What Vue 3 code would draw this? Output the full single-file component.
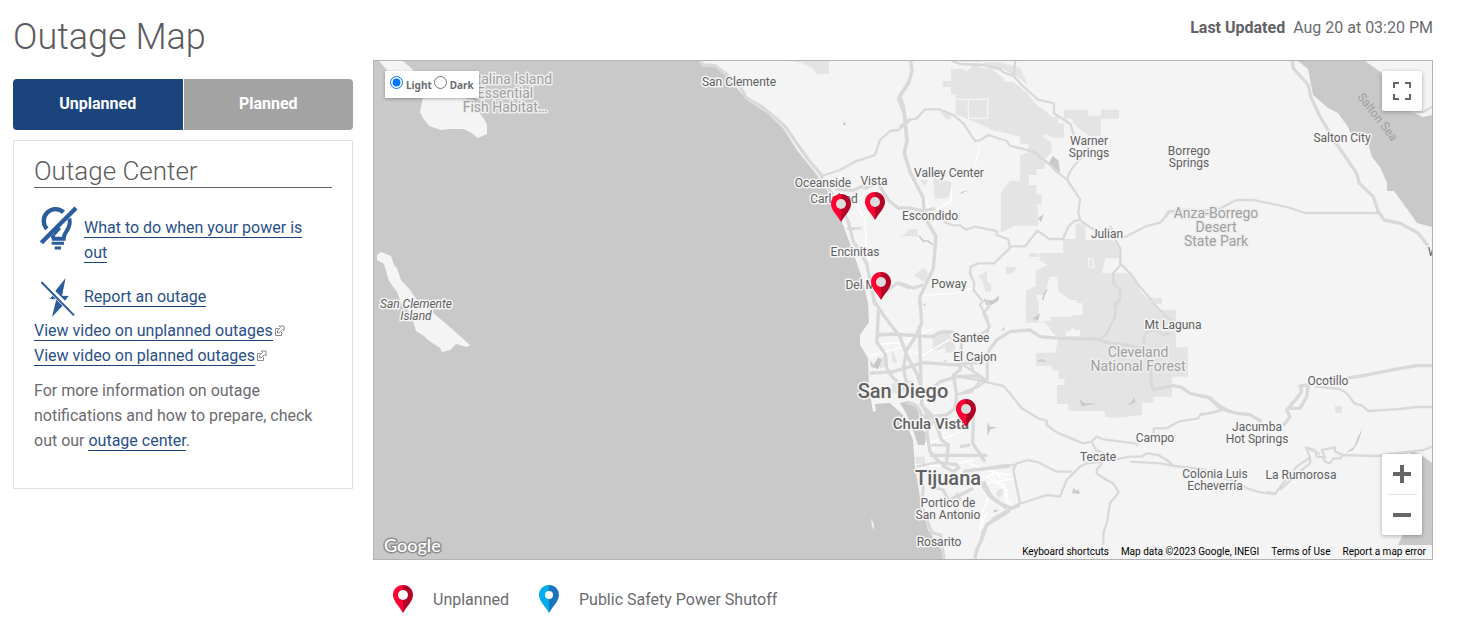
<script setup>
import { ref } from 'vue'

const tab = ref('unplanned')
const theme = ref('light')

const pins = [
  { x: 841, y: 208 },
  { x: 875, y: 206 },
  { x: 881, y: 286 },
  { x: 966, y: 413 },
]

const labels = [
  { x: 506, y: 84, kind: 'area', lines: ['Catalina Island'] },
  { x: 505, y: 98, kind: 'area', lines: ['Essential', 'Fish Habitat…'] },
  { x: 739, y: 86, lines: ['San Clemente'] },
  { x: 823, y: 187, lines: ['Oceanside'] },
  { x: 874, y: 185, lines: ['Vista'] },
  { x: 834, y: 203, lines: ['Carlsbad'] },
  { x: 949, y: 177, lines: ['Valley Center'] },
  { x: 930, y: 220, lines: ['Escondido'] },
  { x: 855, y: 256, lines: ['Encinitas'] },
  { x: 866, y: 289, lines: ['Del Mar'] },
  { x: 949, y: 288, lines: ['Poway'] },
  { x: 1089, y: 145, lines: ['Warner', 'Springs'] },
  { x: 1189, y: 155, lines: ['Borrego', 'Springs'] },
  { x: 1107, y: 238, lines: ['Julian'] },
  { x: 1342, y: 142, lines: ['Salton City'] },
  { x: 1216, y: 218, kind: 'area', lines: ['Anza-Borrego', 'Desert', 'State Park'] },
  { x: 416, y: 308, kind: 'island', lines: ['San Clemente', 'Island'] },
  { x: 971, y: 342, lines: ['Santee'] },
  { x: 975, y: 361, lines: ['El Cajon'] },
  { x: 903, y: 398, kind: 'city', lines: ['San Diego'] },
  { x: 931, y: 429, kind: 'town', lines: ['Chula Vista'] },
  { x: 948, y: 485, kind: 'city', lines: ['Tijuana'] },
  { x: 948, y: 507, lines: ['Portico de', 'San Antonio'] },
  { x: 939, y: 546, lines: ['Rosarito'] },
  { x: 1173, y: 329, lines: ['Mt Laguna'] },
  { x: 1138, y: 357, kind: 'area', lines: ['Cleveland', 'National Forest'] },
  { x: 1155, y: 442, lines: ['Campo'] },
  { x: 1098, y: 461, lines: ['Tecate'] },
  { x: 1257, y: 431, lines: ['Jacumba', 'Hot Springs'] },
  { x: 1215, y: 478, lines: ['Colonia Luis', 'Echeverría'] },
  { x: 1301, y: 479, lines: ['La Rumorosa'] },
  { x: 1328, y: 385, lines: ['Ocotillo'] },
  { x: 1433, y: 256, lines: ['W'] },
]
</script>

<template>
  <main class="page">
    <section class="side">
      <h1>Outage Map</h1>
      <div class="tabs" role="tablist">
        <button role="tab" :class="{ active: tab === 'unplanned' }" :aria-selected="tab === 'unplanned'" @click="tab = 'unplanned'">Unplanned</button>
        <button role="tab" :class="{ active: tab === 'planned' }" :aria-selected="tab === 'planned'" @click="tab = 'planned'">Planned</button>
      </div>
      <div class="card">
        <h2>Outage Center</h2>
        <div class="item">
          <svg class="icon" viewBox="0 0 120 135" width="40" height="45" fill="none" stroke="#2b5c9b">
            <path d="M74 22A35 35 0 0 0 25 73" stroke-width="13" />
            <path d="M91 40C95 58 90 68 83 78Q74 89 74 101H44Q43 92 36 84" stroke-width="12" />
            <path d="M2 110L108 5" stroke="#fff" stroke-width="24" />
            <path d="M60 66L66 72L48 92L44 84Z" fill="#2b5c9b" stroke="none" />
            <path d="M7 113L111 9" stroke-width="13" />
            <path d="M38 115H75M47 129H66" stroke-width="9" />
          </svg>
          <p><a href="#power-out">What to do when your power is out</a></p>
        </div>
        <div class="item report">
          <svg class="icon" viewBox="0 0 120 123" width="40" height="41">
            <path fill="#2b5c9b" d="M80 3L49 42L78 71L89 57L69 56ZM43 53L32 66L52 67L39 120L73 84Z" />
            <path d="M4 12L108 117" stroke="#fff" stroke-width="10" />
            <path d="M7 15L105 115" stroke="#2b5c9b" stroke-width="6" />
          </svg>
          <p><a href="#report">Report an outage</a></p>
        </div>
        <ul class="videos">
          <li v-for="kind in ['unplanned', 'planned']" :key="kind">
            <a :href="'#video-' + kind">View video on {{ kind }} outages</a>
            <svg class="ext" viewBox="0 0 11 11" width="11" height="11" fill="none" stroke="#8a8a8a">
              <path d="M4.500 3.500H1.500V10.500H7.500V7" />
              <path d="M5 1H10V6L8.500 4.500L5.500 7.500L3.500 8V5.500L6.500 2.500Z" fill="#fff" />
            </svg>
          </li>
        </ul>
        <p class="more">For more information on outage notifications and how to prepare, check out our <a href="#center">outage center</a>.</p>
      </div>
    </section>

    <section class="main">
      <p class="updated"><strong>Last Updated</strong> <span>Aug 20 at 03:20 PM</span></p>
      <div class="map">
        <svg class="canvas" viewBox="374 61 1058 498" preserveAspectRatio="xMinYMin slice" role="img" aria-label="Map of outages">
          <defs>
            <symbol id="pin-red" viewBox="0 0 20 28">
              <path fill="#ff0032" d="M10 0C4 0 0 4.500 0 10C0 16 6 21 10 28Z" />
              <path fill="#b30024" d="M10 0C16 0 20 4.500 20 10C20 16 14 21 10 28Z" />
            </symbol>
          </defs>

          <!-- land -->
          <path class="land" d="M700 61L703 67H715L730 79L740 92L747 100L767 113L783 128L797 150L817 175L832 198L843 225L853 252L862 278L868 303L869 322L860 335V345L868 358L869 387L871 400L873 412L876 411L875 404L890 403L903 415L913 440L915 467L920 497L928 530L940 547L944 559H1432V61Z" />
          <path class="land" d="M379 61H403L412 69L422 79L440 85L462 94L475 107L484 119L487 125V134L478 138L470 132L463 129H449L441 130L429 126L423 118L420 112L423 97L404 83L392 76Z" />
          <path class="land" d="M377 255L381 252L391 256L394 265L397 268L401 280L411 291L420 305L432 312L451 328L470 345L467 347L456 344L450 350L442 352L440 348L428 340L424 336L416 331L411 314L401 303L397 292L389 281L384 264L377 260Z" />
          <path class="land" d="M871 518L874 525V530L872 526Z" />

          <!-- water inland -->
          <path class="sea" d="M1298 61L1308 69L1313 95L1328 108L1338 113L1348 127L1350 132L1368 143L1372 157L1380 167L1387 183V191H1394L1410 213L1417 223L1432 227V115L1423 117L1412 112L1382 73L1365 61Z" />
          <path class="sea" d="M1398 545L1410 520V450L1421 455L1432 463V545ZM900 403L909 401L918 410L922 430L926 433L925 445H918L913 430L906 413Z" />

          <!-- parks, north -->
          <g transform="translate(900 55) scale(.333333)">
            <path class="park" d="M153 42H187L202 50L218 30L240 25V38H270L312 70V80H340L381 113L410 150L432 165L455 185H475V205H492V248H460L437 236L428 244L455 265V290L436 313L434 342H410V360H387V390H410V418H425V448H412L415 512H345L302 534V415L330 377H360V303L385 292V268H360V246L320 235L285 228L238 207L167 178V118H153V97H128V78H153Z" />
            <path class="park" d="M492 165H565V182H603V164H657V191H603V240L577 247L545 228L517 202V191H492Z" />
            <path class="park" d="M527 505H556V555H635L660 575V610H617L607 650V750H530L475 708L472 665H407V646L443 630L418 614V594H489V552H527Z" />
            <path class="park" d="M407 665H450L432 720H410V750H378V708L407 692ZM387 595H415V606H390ZM317 636H347V645L332 657H319ZM236 663L260 648L262 677L274 690V710H256L250 685ZM98 370L153 380L156 406L140 430L105 432ZM42 660L70 638L83 651L78 685ZM720 728H786V748H720Z" />
            <path class="park" d="M119 168L155 180L151 194L137 192ZM12 542L25 524L52 521L54 545ZM60 376L82 374L76 395Z" />
            <path class="pale" d="M168 133H263V190H205V134M565 612H577L584 637L567 635Z" />
            <path class="dark" d="M445 328L458 303L475 316L480 350L470 355ZM414 490L431 478L423 502ZM252 730L275 740L296 722V736L275 750H258ZM180 418L206 406L185 410Z" />
            <path class="dark-line" d="M57 543L70 558L84 558L99 569M427 750L431 720L441 704" />
          </g>
          <path class="park" d="M955 61H980L994 68H1000L1015 75L1028 85L1020 68L1000 62ZM789 61H829V74H817L812 68L802 63Z" />
          <!-- parks, south -->
          <g transform="translate(960 300) scale(.333333)">
            <path class="park" d="M196 0H236V65H255V30H360V45H388V0H505L570 0L600 30H648V142H684V230H636V290H581V308H546V345L470 353L435 351V333H325V312H291V255H313V237H295V212H275V197H228V158H285L295 115L275 95L255 68H198Z" />
            <path class="park" d="M378 -68H430V60H360V15L378 0ZM425 -80H510L545 -20L570 0V60H425Z" />
            <path class="land" d="M245 0H350V10H368V45H338V50H272V62H245ZM318 108V96L332 92L337 80L345 90H360V108Z" />
            <path class="dark" d="M82 365L90 380L112 382L92 388L82 408ZM357 295L370 308L408 312L365 318ZM502 310L515 308L521 291L527 306L510 315ZM336 580L341 562L347 573L355 568L360 582ZM218 57L240 40L235 60ZM230 184L245 177L262 185ZM104 628L116 634L100 637ZM124 90L135 80L131 92ZM68 2L90 15L108 0Z" />
            <path class="park" d="M107 580L118 567L130 568V582L116 595Z" />
          </g>
          <g transform="translate(740 300) scale(.333333)">
            <path class="park" d="M578 112L600 96L630 97L635 120L620 140L595 150H577ZM615 130L640 125L648 145L635 158H617ZM452 143L473 186L460 189ZM420 175L434 169V200L420 205ZM525 472L553 469L556 492H528ZM455 250H480L520 240V280H455Z" />
            <path class="dark" d="M390 180L400 195L415 172L425 180L415 207L393 200ZM388 215L405 214L400 222ZM610 182L624 180L613 185ZM548 15L560 8L553 18Z" />
          </g>
          <path class="dark" d="M843 125L844 121L846 125ZM846 228L860 228L850 231ZM1345 453L1354 447L1358 437L1363 427L1358 442L1353 450Z" />
          <path class="park" d="M1335 406H1342V413H1335ZM910 232L900 236H905L910 228Z" />

          <!-- white streets -->
          <g class="street">
            <g transform="translate(900 55) scale(.333333)"><path d="M237 262L234 300L222 340M155 395L153 440L105 465M55 722L160 716L215 700M75 430L90 470L107 510" /></g>
            <g transform="translate(740 300) scale(.333333)"><path d="M388 168L480 143L495 150L550 165L630 118M415 132L490 128L580 85M555 432L620 412L680 388M720 690L730 630L755 570M535 495L620 500L700 480M690 490L730 510L810 525M740 530L800 570L805 625M760 510L790 545M570 550L600 575M610 410L620 345" /></g>
            <g transform="translate(960 300) scale(.333333)"><path d="M50 505L70 535L105 520L150 540M75 550L165 535M90 500L105 545L135 555V600L155 612M60 690L80 635" /></g>
            <g transform="translate(640 55) scale(.333333)"><path d="M600 355V385L590 410M650 455L675 490L680 600L695 620M600 420L615 460" /></g>
          </g>

          <!-- roads -->
          <g class="road">
            <g transform="translate(640 55) scale(.333333)">
              <path class="wide" d="M180 17L190 30L225 32L275 70L300 95L318 128L365 155L400 183L437 216L470 265L510 320L540 355L565 400L600 450L625 500L640 560L680 625L690 680L705 750" />
              <path class="wide" d="M810 75L775 130L793 175L800 258L793 295L810 350M670 400L715 385L745 435L775 460L810 459M585 402L640 406L670 392M740 708L772 684L810 699" />
              <path d="M545 363L600 345L645 320L705 300L720 255L750 228L775 225L810 195M625 520H665" />
            </g>
            <g transform="translate(900 55) scale(.333333)">
              <path class="wide" d="M32 17L36 48L25 85L0 123L12 160L22 260L12 290L30 350L70 430L72 465L85 505L108 545L100 640L60 725L58 750" />
              <path class="wide" d="M0 459L35 460L70 468L105 460M0 685L40 699L70 690" />
              <path d="M155 17L180 27L250 30L300 42L310 52L340 62L365 90L413 133L462 145V175L512 208L522 242M346 17L341 62M0 215L25 195L50 190L75 163H118L160 180L190 205L225 258L240 256L265 240L320 258L330 272L400 290L445 325L470 350L502 375L540 433L535 470L540 495L522 498L505 515L489 552H448L412 527L375 574H335L282 625H235L212 635L210 655L223 685L221 706L245 735M502 375Q505 335 580 280M540 495L575 520L640 545L661 580V630L640 655V685L660 705V735L640 750M630 513L650 545M661 625L695 660L715 690L755 735M130 500L158 511H180L198 524L225 515L290 528V540L325 553L330 578M668 550L735 515L780 503L810 470L850 466" />
            </g>
            <g transform="translate(1165 0) scale(.333333)">
              <path d="M0 650L10 635L60 628L110 632L160 628L215 600H265L370 622L420 639H640M740 335L775 336L802 320" />
              <path class="wide" d="M382 182L385 205L430 255L437 290L465 350L510 425L575 520L583 550L625 590L640 635L658 660L705 670L760 700L802 755" />
            </g>
            <g transform="translate(740 300) scale(.333333)">
              <path class="wide" d="M400 0L430 45L480 110L500 165L530 220L545 265V310L575 370L560 395L570 455L600 488L655 495M415 30L412 105L410 125L436 163L440 205L460 235L500 270M540 0L545 70L530 105L500 150L490 205L500 250M538 75L543 250M415 105L460 102L500 105L575 110L605 95L635 96L670 115M390 220L460 215L550 188L650 195L690 188M665 125L660 210L640 225L650 285L645 325L620 345L550 352M545 290L600 245L650 230L705 228L740 240M500 310Q530 305 545 345L565 355M540 310L580 350L605 420L625 435L620 488M570 466H742M690 300L700 350L698 430L715 455L735 485M660 440L690 435M670 515L700 510L810 498M660 500L640 515L605 495M575 560L610 570L625 600L650 590L700 565M650 580L660 600M730 545L755 590L800 625M810 632L740 675L725 720L710 750L705 776M550 555L545 620L575 698L602 705L612 776" />
              <path d="M735 0L750 15L730 40L748 80L740 105L720 110M670 195L740 240L715 260L655 283M720 190H690L700 210M575 435L620 437M530 500L600 485M740 180L742 240" />
            </g>
            <g transform="translate(960 300) scale(.333333)">
              <path class="wide" d="M84 155L110 120L150 95L210 90L240 110L300 115L410 117L440 127L500 135L540 145L570 190L575 255L580 268L640 257L665 262L690 280L745 292L790 325L810 335M60 545L90 590L115 608L155 625L180 615" />
              <path d="M84 155L82 240L60 242L0 230M0 282L35 275L60 242L130 258L150 280L185 325L235 355L260 362V375L290 397L370 430L395 425L410 410L430 418L525 430L535 437M395 425L408 450L430 460L425 490L410 510V520L440 540L460 550L476 577L450 610L440 670L430 700V735M430 485L510 470H545L560 460L595 465L620 480L640 497L740 510M510 485L600 490L650 500M430 485L380 490L360 500L340 520L320 540L300 590L260 585L200 605L180 610L160 510L170 490L205 480L235 487L290 515H335M60 510L120 497L165 495M180 610L100 655L70 690L45 776M70 0L60 15L80 50L88 80L75 95L45 110M480 0L465 20V50L440 100L420 120M580 400L582 385H620L655 365L715 355L720 345L785 332M555 135L550 115L560 95L590 90L610 105L630 100M575 5L615 45L650 75" />
            </g>
            <g transform="translate(1200 250) scale(.333333)">
              <path class="wide" d="M0 437L30 443L60 475L110 490L150 494L185 515M250 527L270 500L260 480L290 445L305 425L300 408L325 405L320 440L300 475H270M440 385L500 375L600 355L650 347H696" />
              <path d="M0 492L30 490L60 480M345 410L420 417L440 430L463 460L485 466L505 483L600 477L650 471H696M50 680L110 695L140 715L185 728L225 732L245 705L290 650L330 622L318 592L345 600L350 620L375 622L365 600L405 592L405 605L430 615L420 625L400 625L390 640L375 635L370 620M425 615L530 618L670 600L696 590M230 732L200 725M330 620L330 640L300 665L240 720M318 592L360 612" />
            </g>
          </g>

          <text class="sea-name" transform="translate(1357 97) rotate(52)">Salton Sea</text>
          <text v-for="label in labels" :key="label.lines[0] + label.x" :x="label.x" :y="label.y" :class="['label', label.kind]">
            <tspan v-for="(line, i) in label.lines" :key="line" :x="label.x" :dy="i ? (label.kind === 'area' ? 14 : 12) : 0">{{ line }}</tspan>
          </text>

          <g v-for="pin in pins" :key="pin.x">
            <use href="#pin-red" :x="pin.x - 10" :y="pin.y - 14" width="20" height="28" />
            <circle :cx="pin.x" :cy="pin.y - 4" r="5" fill="#dcdcdc" />
          </g>
        </svg>

        <fieldset class="theme">
          <label><input v-model="theme" type="radio" name="theme" value="light" />Light</label>
          <label><input v-model="theme" type="radio" name="theme" value="dark" />Dark</label>
        </fieldset>

        <button class="control full" aria-label="Toggle fullscreen view">
          <svg viewBox="0 0 18 18" width="18" height="18" fill="none" stroke="#666" stroke-width="2"><path d="M1 6V1H6M12 1H17V6M17 12V17H12M6 17H1V12" /></svg>
        </button>
        <div class="control zoom">
          <button aria-label="Zoom in"><svg viewBox="0 0 18 18" width="18" height="18" fill="#666"><path d="M7 0H11V7H18V11H11V18H7V11H0V7H7Z" /></svg></button>
          <hr />
          <button aria-label="Zoom out"><svg viewBox="0 0 18 18" width="18" height="18" fill="#666"><path d="M0 7H18V11H0Z" /></svg></button>
        </div>

        <div class="brand">Google</div>
        <div class="credits">
          <button>Keyboard shortcuts</button>
          <span>Map data ©2023 Google, INEGI</span>
          <a href="#terms">Terms of Use</a>
          <a href="#error">Report a map error</a>
        </div>
      </div>

      <ul class="legend">
        <li>
          <svg viewBox="0 0 20 28" width="20" height="28">
            <path fill="#ff0032" d="M10 0C4 0 0 4.500 0 10C0 16 6 21 10 28Z" />
            <path fill="#b30024" d="M10 0C16 0 20 4.500 20 10C20 16 14 21 10 28Z" />
            <circle cx="10" cy="10" r="5" fill="#fff" />
          </svg>
          Unplanned
        </li>
        <li>
          <svg viewBox="0 0 20 28" width="20" height="28">
            <path fill="#00adef" d="M10 0C4 0 0 4.500 0 10C0 16 6 21 10 28Z" />
            <path fill="#1c75bc" d="M10 0C16 0 20 4.500 20 10C20 16 14 21 10 28Z" />
            <circle cx="10" cy="10" r="4" fill="#fff" />
          </svg>
          Public Safety Power Shutoff
        </li>
      </ul>
    </section>
  </main>
</template>

<style>
body {
  margin: 0;
  background: #fff;
}
</style>

<style scoped>
.page {
  display: grid;
  grid-template-columns: 340px minmax(0, 1fr);
  gap: 20px;
  padding: 0 27px 0 13px;
  color: #6b6b6f;
  font: 400 16px/25px Roboto, "Liberation Sans", sans-serif;
}
h1, h2, p, ul {
  margin: 0;
  padding: 0;
  list-style: none;
}
h1, h2 {
  color: #5c5c60;
  font-weight: 300;
}
h1 {
  padding-top: 15px;
  font-size: 36px;
  line-height: 44px;
}
.tabs {
  display: flex;
  gap: 1px;
  margin-top: 20px;
  border-radius: 4px;
  overflow: hidden;
}
.tabs button {
  flex: 1;
  height: 51px;
  padding: 0 0 2px;
  border: 0;
  background: #a3a3a3;
  color: #fff;
  font: 700 16px/20px Roboto, sans-serif;
}
.tabs .active {
  background: #1b447d;
}
.card {
  margin-top: 10px;
  padding: 14px 20px 35px;
  border: 1px solid #e0e0e0;
}
h2 {
  border-bottom: 1px solid #626266;
  font-size: 26px;
  line-height: 32px;
}
a {
  color: #2a508a;
  text-decoration: none;
}
.card a {
  border-bottom: 1px solid #1b447d;
}
.item {
  display: flex;
  gap: 5px;
  padding: 17px 20px 0 5px;
}
.item p {
  padding-top: 10px;
}
.item.report {
  padding-top: 12px;
}
.report p {
  padding-top: 7px;
}
.icon {
  flex: none;
}
.ext {
  margin-left: 1px;
}
.more {
  margin-top: 10px;
}
.updated {
  height: 60px;
  padding-top: 15px;
  box-sizing: border-box;
  text-align: right;
}
.updated strong {
  margin-right: 4px;
  color: #626266;
  font-weight: 700;
}
.map {
  position: relative;
  height: 498px;
  border: 1px solid #b3b3b3;
  background: #c9c9c9;
  overflow: hidden;
}
.canvas {
  display: block;
  width: 100%;
  height: 100%;
}
.land { fill: #f4f4f4; }
.sea { fill: #c9c9c9; }
.park { fill: #e4e4e4; }
.dark { fill: #c9c9c9; }
.dark-line { fill: none; stroke: #c9c9c9; stroke-width: 5; }
.pale { fill: none; stroke: #f4f4f4; stroke-width: 4; }
.road {
  fill: none;
  stroke: #d9d9d9;
  stroke-width: 7;
  stroke-linejoin: round;
}
.road .wide { stroke-width: 10; }
.street {
  fill: none;
  stroke: #fff;
  stroke-width: 4;
}
.label {
  fill: #616161;
  stroke: #f5f5f5;
  stroke-width: 3px;
  stroke-linejoin: round;
  paint-order: stroke;
  text-anchor: middle;
  font: 400 12px Roboto, sans-serif;
}
.label.area {
  fill: #a0a0a0;
  stroke: #eee;
  font-size: 14px;
}
.label.island {
  font-style: italic;
}
.label.city {
  font-size: 20px;
  font-weight: 500;
}
.label.town {
  font-size: 15px;
  font-weight: 500;
}
.sea-name {
  fill: #9e9e9e;
  font: 400 12px Roboto, sans-serif;
}
.theme {
  position: absolute;
  top: 10px;
  left: 11px;
  display: flex;
  gap: 2px;
  height: 27px;
  margin: 0;
  padding: 0 5px;
  box-sizing: border-box;
  border: 0;
  background: #fff;
  box-shadow: 0 1px 3px rgba(0, 0, 0, .3);
  font: 700 10px/28px "Noto Sans", sans-serif;
}
.theme label {
  display: flex;
  gap: 3px;
}
.theme input {
  width: 13px;
  height: 13px;
  margin: 5px 0 0;
}
.control {
  position: absolute;
  right: 10px;
  width: 40px;
  border: 0;
  border-radius: 2px;
  background: #fff;
  box-shadow: 0 1px 4px rgba(0, 0, 0, .3);
}
.control.full {
  top: 10px;
  display: grid;
  place-items: center;
  height: 40px;
  padding: 0;
}
.zoom {
  bottom: 24px;
}
.zoom button {
  display: grid;
  place-items: center;
  width: 40px;
  height: 40px;
  padding: 0;
  border: 0;
  background: none;
}
.zoom hr {
  height: 1px;
  margin: 0 5px;
  border: 0;
  background: #e6e6e6;
}
.brand {
  position: absolute;
  left: 10px;
  bottom: 3px;
  color: #fff;
  font: 500 18px/22px Lato, sans-serif;
  -webkit-text-stroke: 3px #8e8e8e;
  paint-order: stroke fill;
}
.credits {
  position: absolute;
  right: 0;
  bottom: 0;
  display: flex;
  gap: 12px;
  padding: 0 6px;
  background: rgba(245, 245, 245, .7);
  color: #000;
  font: 400 10px/14px Roboto, sans-serif;
}
.credits a,
.credits button {
  padding: 0;
  border: 0;
  background: none;
  color: #000;
  font: inherit;
}
.legend {
  display: flex;
  gap: 30px;
  padding: 25px 20px 0;
}
.legend li {
  display: flex;
  align-items: center;
  gap: 20px;
}
</style>
